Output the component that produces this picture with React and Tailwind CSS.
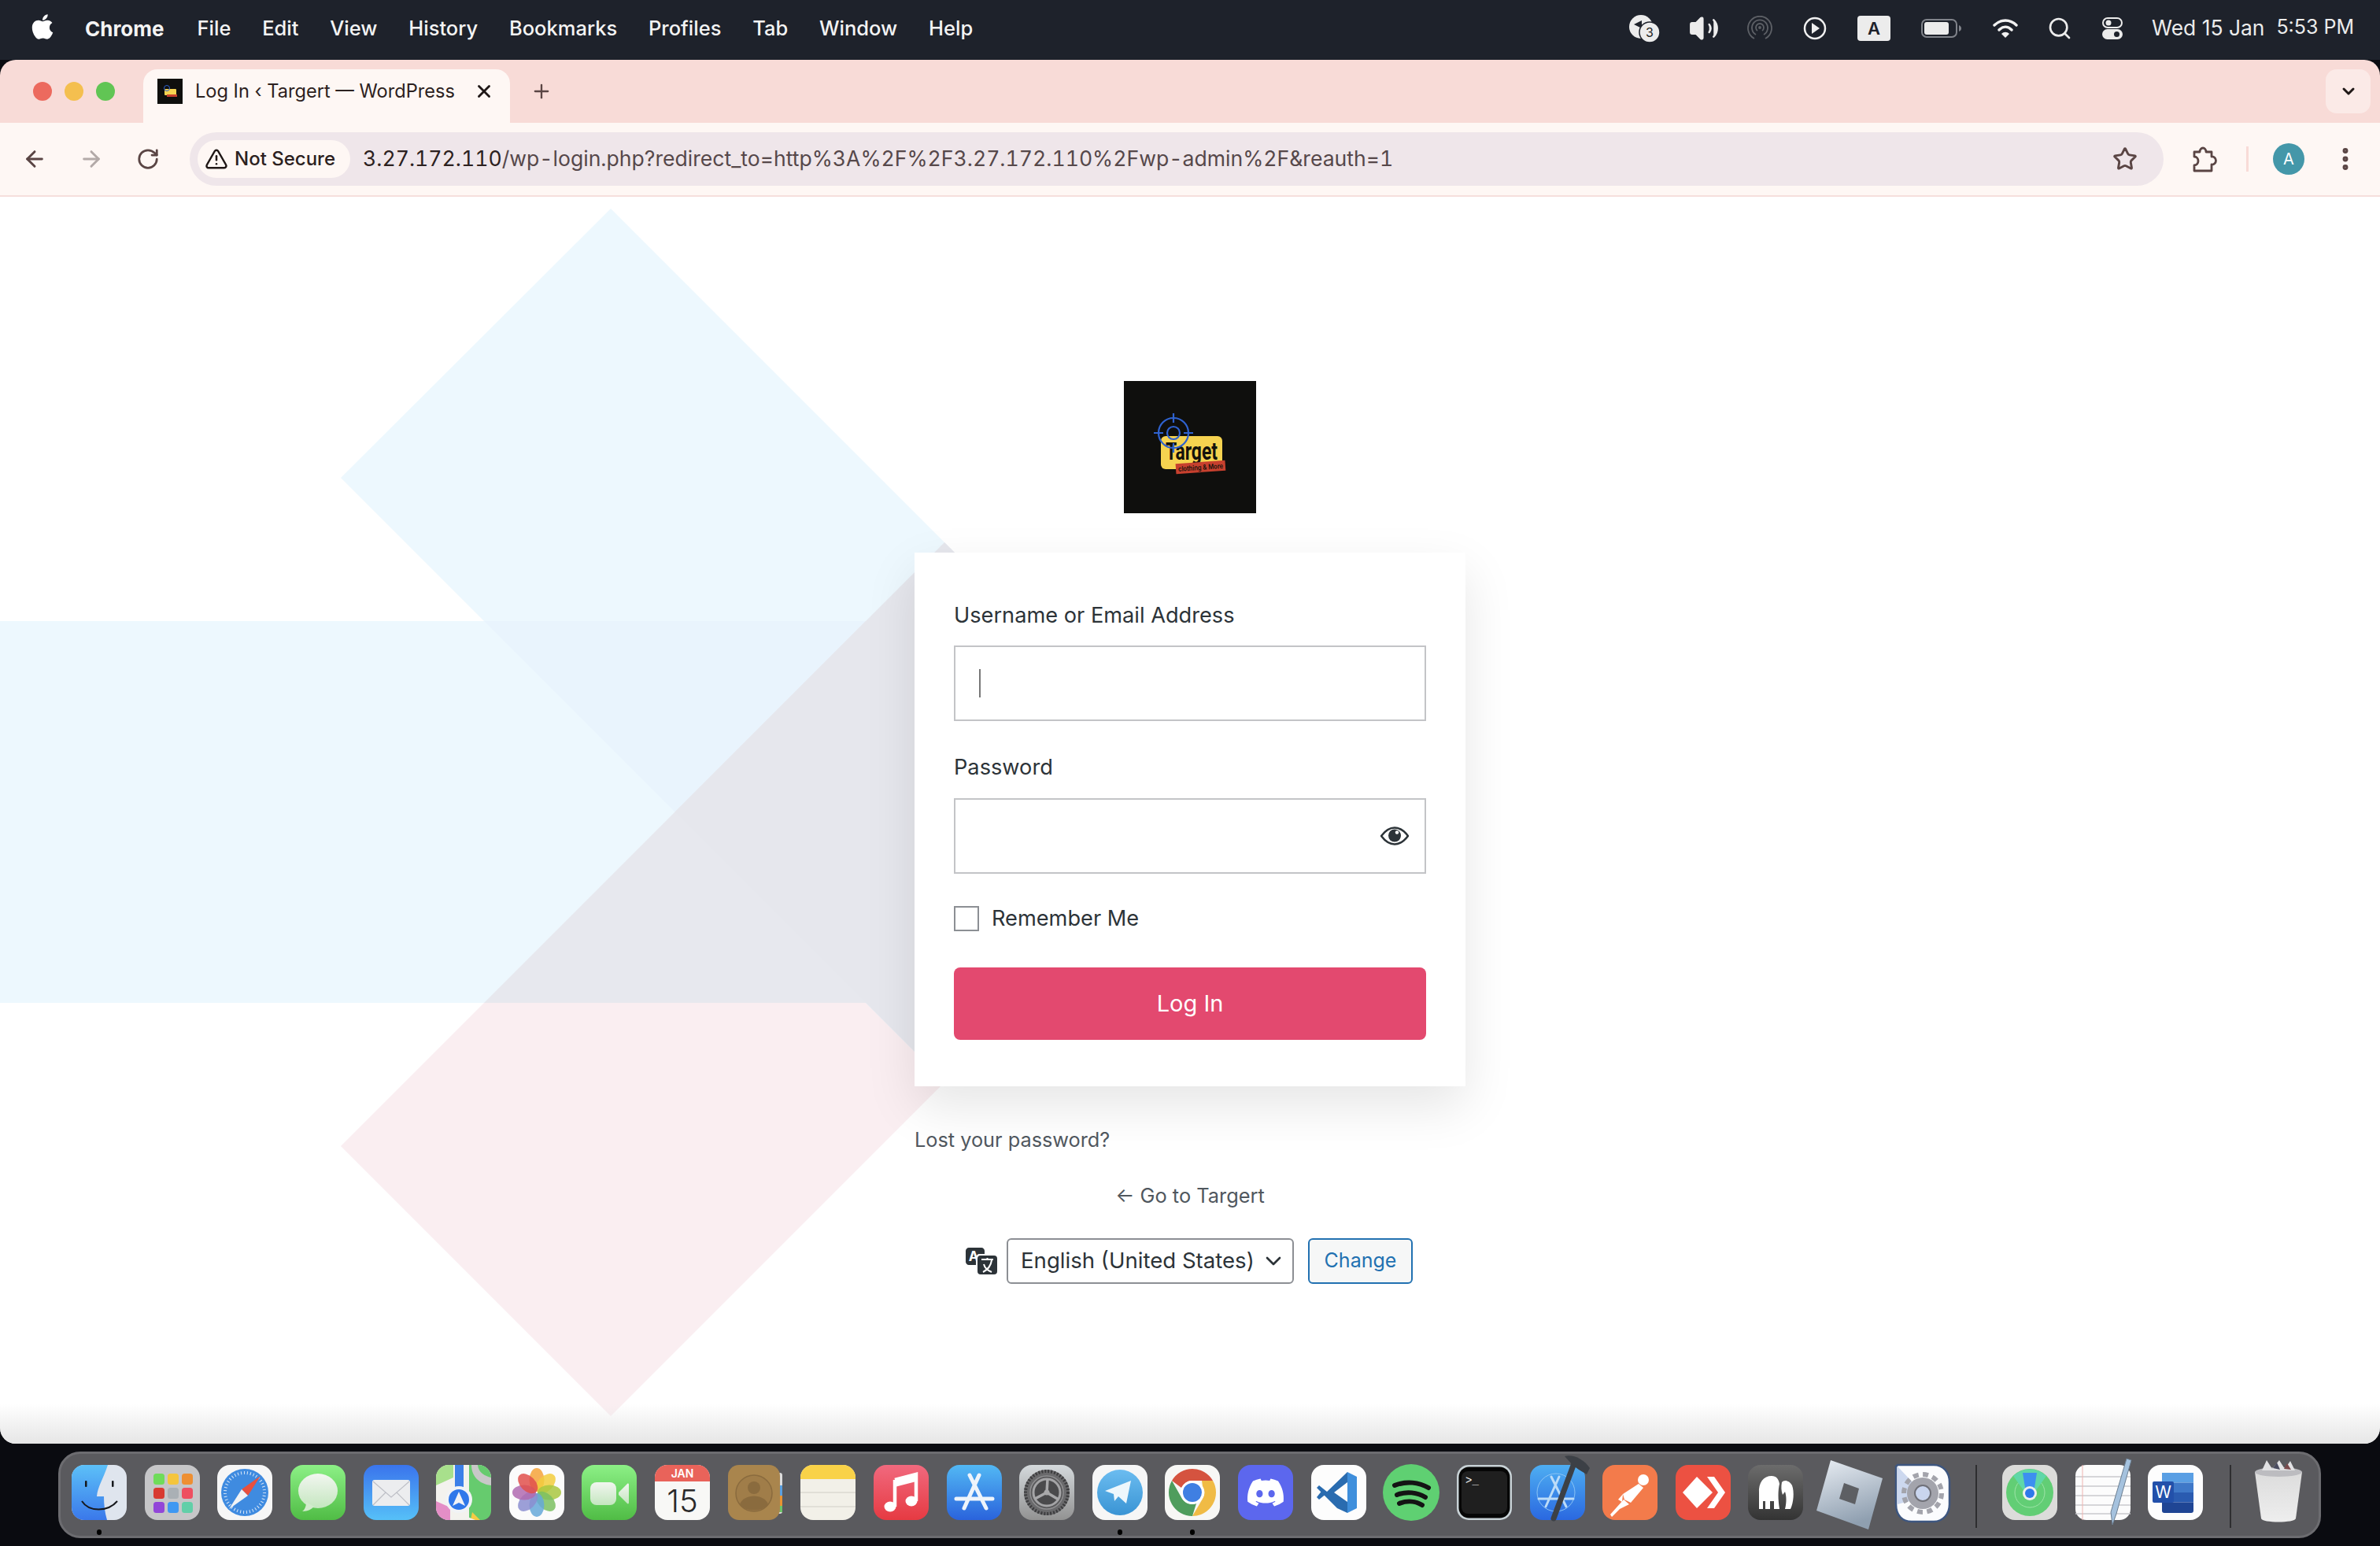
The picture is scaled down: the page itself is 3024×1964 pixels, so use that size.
import React from 'react';
import { ArrowLeft, ArrowRight, RotateCw, TriangleAlert, Star, X, Plus, ChevronDown, EllipsisVertical, Search, Volume2 } from 'lucide-react';
import { FaApple, FaDiscord } from 'react-icons/fa';

const menuItems = ['File', 'Edit', 'View', 'History', 'Bookmarks', 'Profiles', 'Tab', 'Window', 'Help'];

// Small wrapper so every dock icon shares the same 70px canvas
const Ico = ({ children }) => (
  <svg viewBox="0 0 70 70" className="w-[70px] h-[70px] overflow-visible">{children}</svg>
);

const Grad = ({ id, from, to }) => (
  <linearGradient id={id} x1="0" y1="0" x2="0" y2="1">
    <stop offset="0" stopColor={from} />
    <stop offset="1" stopColor={to} />
  </linearGradient>
);

const Finder = () => (
  <Ico>
    <defs><Grad id="fin" from="#5cc0f8" to="#3a78ea" /></defs>
    <rect width="70" height="70" rx="16" fill="#dfe5ee" />
    <path d="M16 0H46C40 18 33 28 32 40H41C41 50 42 60 45 70H16C7 70 0 63 0 54V16C0 7 7 0 16 0Z" fill="url(#fin)" />
    <path d="M13 46C22 60 46 60 58 46" fill="none" stroke="#16181c" strokeWidth="2" />
    <rect x="17" y="20" width="2.5" height="8" rx="1" fill="#16181c" />
    <rect x="51" y="20" width="2.5" height="8" rx="1" fill="#16181c" />
  </Ico>
);

const launchColors = ['#6fdc5a', '#f5c53c', '#ee8f32', '#d83a30', '#aab0b5', '#ee4f60', '#9246d8', '#3f98f2', '#62cfa8'];
const Launchpad = () => (
  <Ico>
    <rect width="70" height="70" rx="16" fill="#c6c6c8" />
    {launchColors.map((c, i) => (
      <rect key={i} x={11 + (i % 3) * 18} y={11 + Math.floor(i / 3) * 18} width="14" height="14" rx="3.5" fill={c} />
    ))}
  </Ico>
);

const Safari = () => (
  <Ico>
    <rect width="70" height="70" rx="16" fill="#f6f6f6" />
    <circle cx="35" cy="35" r="30" fill="#3f8be0" />
    <circle cx="35" cy="35" r="25" fill="none" stroke="#dce9f8" strokeWidth="4" strokeDasharray="1 3" />
    <path d="M55 14L31 31L39 39Z" fill="#e8503e" />
    <path d="M15 56L31 31L39 39Z" fill="#f1f3f5" />
  </Ico>
);

const Messages = () => (
  <Ico>
    <defs>
      <Grad id="msg" from="#8cf086" to="#50bc45" />
      <Grad id="msgb" from="#f2f6f0" to="#c4e6bf" />
    </defs>
    <rect width="70" height="70" rx="16" fill="url(#msg)" />
    <ellipse cx="35" cy="33" rx="25" ry="22" fill="url(#msgb)" />
    <path d="M20 47C20 53 18 57 15 59C22 59 27 56 30 53Z" fill="#d2ebcd" />
  </Ico>
);

const Mail = () => (
  <Ico>
    <defs><Grad id="mail" from="#3a74ec" to="#56c0f8" /></defs>
    <rect width="70" height="70" rx="16" fill="url(#mail)" />
    <rect x="11" y="19" width="48" height="33" rx="3" fill="#ecedef" />
    <path d="M12 21L35 41L58 21M12 51L28 35M58 51L42 35" fill="none" stroke="#bdbfc6" strokeWidth="1.2" />
  </Ico>
);

const Maps = () => (
  <Ico>
    <rect width="70" height="70" rx="16" fill="#f3f2ee" />
    <path d="M0 16C0 7 7 0 16 0H22V16L0 26Z" fill="#a8e08c" />
    <path d="M42 0H54C63 0 70 7 70 16V58C70 64 66 70 58 70H42V58Z" fill="#66cb6e" />
    <path d="M0 46L18 54V70H16C7 70 0 63 0 54Z" fill="#e48ec6" />
    <path d="M46 60L56 70H44Z" fill="#f6cb44" />
    <rect x="24" y="0" width="11" height="30" fill="#3c7fe8" />
    <path d="M45 0C45 14 54 24 70 26V16C62 14 54 10 53 0Z" fill="#c8c8c8" />
    <path d="M20 58L50 70H30Z" fill="#f3f2ee" />
    <circle cx="29" cy="44" r="17" fill="#f1f3f6" />
    <circle cx="29" cy="44" r="13" fill="#2f78ea" />
    <path d="M29 34L37 52L29 48L21 52Z" fill="#f1f3f6" />
  </Ico>
);

const petals = ['#f5a33a', '#f2cc3d', '#a9c73f', '#7bbf62', '#66a8d8', '#8b8ed0', '#b06ab0', '#e0504c'];
const Photos = () => (
  <Ico>
    <rect width="70" height="70" rx="16" fill="#fbfbfb" />
    {petals.map((c, i) => (
      <ellipse key={c} cx="35" cy="19" rx="9.5" ry="15" fill={c} fillOpacity="0.85" transform={`rotate(${i * 45} 35 35)`} />
    ))}
  </Ico>
);

const FaceTime = () => (
  <Ico>
    <defs>
      <Grad id="ft" from="#8cf086" to="#50bc45" />
      <Grad id="ftb" from="#f2f6f0" to="#c4e6bf" />
    </defs>
    <rect width="70" height="70" rx="16" fill="url(#ft)" />
    <rect x="11" y="22" width="33" height="29" rx="8" fill="url(#ftb)" />
    <path d="M47 35L58 24C59 23 60 24 60 25V48C60 49 59 50 58 49L47 38Z" fill="url(#ftb)" />
  </Ico>
);

const Calendar = () => (
  <Ico>
    <rect width="70" height="70" rx="16" fill="#f8f8f6" />
    <path d="M16 0H54C63 0 70 7 70 16V21H0V16C0 7 7 0 16 0Z" fill="#e9635a" />
    <text x="35" y="16" textAnchor="middle" fontSize="14" fontWeight="600" fill="#fff" fontFamily="Inter, sans-serif">JAN</text>
    <text x="35" y="60" textAnchor="middle" fontSize="40" fontWeight="300" fill="#2a2a2a" fontFamily="Inter, sans-serif">15</text>
  </Ico>
);

const Contacts = () => (
  <Ico>
    <rect x="60" y="10" width="9" height="52" rx="3" fill="#dcdcdc" />
    <rect x="64" y="26" width="5" height="13" fill="#5a9fe0" />
    <rect x="64" y="39" width="5" height="13" fill="#e89332" />
    <rect x="64" y="52" width="5" height="8" fill="#6cc368" />
    <rect width="66" height="70" rx="14" fill="#a9854d" />
    <circle cx="33" cy="36" r="23" fill="#a07d49" stroke="#8a6b3e" strokeWidth="1.5" />
    <circle cx="33" cy="29" r="8" fill="#8a6b3e" />
    <path d="M15 50C20 36 46 36 51 50C45 60 21 60 15 50Z" fill="#8a6b3e" />
  </Ico>
);

const Notes = () => (
  <Ico>
    <rect width="70" height="70" rx="16" fill="#f2f0e8" />
    <path d="M16 0H54C63 0 70 7 70 16V18H0V16C0 7 7 0 16 0Z" fill="#f9d248" />
    <path d="M0 35H70M0 53H70" stroke="#dbd9d1" strokeWidth="1.5" />
  </Ico>
);

const Music = () => (
  <Ico>
    <defs><Grad id="mus" from="#f1697e" to="#e63a42" /></defs>
    <rect width="70" height="70" rx="16" fill="url(#mus)" />
    <path d="M27 19L54 12V46" fill="none" stroke="#fff" strokeWidth="4.5" />
    <path d="M27 19V53" stroke="#fff" strokeWidth="4.5" />
    <path d="M27 19L54 12V21L27 28Z" fill="#fff" />
    <ellipse cx="21" cy="53" rx="7.5" ry="6.5" fill="#fff" />
    <ellipse cx="48" cy="46" rx="7.5" ry="6.5" fill="#fff" />
  </Ico>
);

const AppStore = () => (
  <Ico>
    <defs><Grad id="app" from="#52b8f4" to="#2a63dc" /></defs>
    <rect width="70" height="70" rx="16" fill="url(#app)" />
    <path d="M41 13L22 55M29 13L50 55M12 43H58" stroke="#eef4fb" strokeWidth="5" strokeLinecap="round" />
  </Ico>
);

const SystemSettings = () => (
  <Ico>
    <defs><Grad id="set" from="#d4d9dc" to="#929292" /></defs>
    <rect width="70" height="70" rx="16" fill="url(#set)" />
    <circle cx="35" cy="35" r="29" fill="#6a6a6c" />
    <circle cx="35" cy="35" r="27" fill="none" stroke="#3c3c3e" strokeWidth="4" strokeDasharray="2 2" />
    <circle cx="35" cy="35" r="21" fill="#58585a" stroke="#8e8e90" strokeWidth="1.5" />
    <circle cx="35" cy="35" r="17" fill="#4a4a4c" stroke="#a4a4a6" strokeWidth="3" />
    <path d="M35 35L36 18M35 35L50 44M35 35L20 43" stroke="#a8a8aa" strokeWidth="3.5" />
    <circle cx="35" cy="35" r="3.500" fill="#a8a8aa" />
  </Ico>
);

const Telegram = () => (
  <Ico>
    <defs><Grad id="tg" from="#6bbcf0" to="#3a94d4" /></defs>
    <rect width="70" height="70" rx="16" fill="#f6f6f6" />
    <circle cx="35" cy="35" r="29" fill="url(#tg)" />
    <path d="M49 20L43 49L33 40L28 46L27 37L16 33Z" fill="#eef7fc" />
  </Ico>
);

const Chrome = () => (
  <Ico>
    <rect width="70" height="70" rx="16" fill="#f7f7f5" />
    <path d="M35 5A30 30 0 0 1 61 20H35A15 15 0 0 0 21 29L9 20A30 30 0 0 1 35 5Z" fill="#d5533f" />
    <path d="M61 20A30 30 0 0 1 35 65L48 43A15 15 0 0 0 48 27L47 20Z" fill="#f0bb45" />
    <path d="M35 65A30 30 0 0 1 9 20L22 43A15 15 0 0 0 40 49Z" fill="#4f9d5d" />
    <circle cx="35" cy="35" r="15" fill="#fff" />
    <circle cx="35" cy="35" r="12" fill="#3f7fe2" />
  </Ico>
);

const Discord = () => (
  <div className="w-[70px] h-[70px] rounded-[16px] bg-[#5c67ee] flex items-center justify-center">
    <FaDiscord className="w-[50px] h-[50px] text-white" />
  </div>
);

const VsCode = () => (
  <Ico>
    <rect width="70" height="70" rx="16" fill="#fdfdfd" />
    <path d="M46 9L58 15V55L46 61Z" fill="#3f8fdc" />
    <path d="M46 9L20 34L10 26L7 29L33 55L46 61V47L29 35L46 22Z" fill="#2a6cb0" />
    <path d="M7 41L10 44L20 36L15 31Z" fill="#2a6cb0" />
  </Ico>
);

const Spotify = () => (
  <div className="w-[70px] h-[70px] flex items-center justify-center">
    <svg viewBox="0 0 72 72" className="w-[72px] h-[72px] shrink-0">
      <circle cx="36" cy="36" r="36" fill="#5fd072" />
      <path d="M15 27C30 21 46 23 58 30M18 39C30 34 44 36 54 42M21 50C31 46 42 47 50 52" fill="none" stroke="#141414" strokeWidth="6" strokeLinecap="round" />
    </svg>
  </div>
);

const Terminal = () => (
  <Ico>
    <rect width="70" height="70" rx="15" fill="#c8d2d6" />
    <rect x="2.5" y="2.5" width="65" height="65" rx="13" fill="#060606" />
    <rect x="6" y="8" width="58" height="54" rx="8" fill="#1f1f1f" />
    <text x="11" y="24" fontSize="14" fill="#f2f2f2" fontFamily="Liberation Mono, monospace">&gt;_</text>
  </Ico>
);

const Xcode = () => (
  <Ico>
    <defs><Grad id="xc" from="#4eaef2" to="#2a68e0" /></defs>
    <rect width="70" height="70" rx="16" fill="url(#xc)" />
    <circle cx="33" cy="35" r="24" fill="none" stroke="#8ac4f5" strokeWidth="1" />
    <path d="M37 15L20 53M27 15L46 53M11 43H55" stroke="#bcdcf8" strokeWidth="3" strokeLinecap="round" />
    <path d="M56 -2L30 68" stroke="#3c4046" strokeWidth="7" strokeLinecap="round" />
    <path d="M44 -11C54 -14 68 -8 76 4L72 12L62 6C56 2 50 -4 44 -11Z" fill="#3c4046" />
  </Ico>
);

const Postman = () => (
  <Ico>
    <rect width="70" height="70" rx="16" fill="#f37b4b" />
    <circle cx="52" cy="19" r="7" fill="#fff" />
    <path d="M46 24L52 29L36 48L28 44L26 37Z" fill="#fff" />
    <path d="M27 44L34 50L22 56L12 66L10 63L18 54Z" fill="#fff" />
    <path d="M26 37L20 44L25 47" fill="#fff" />
  </Ico>
);

const AnyDesk = () => (
  <Ico>
    <rect width="70" height="70" rx="16" fill="#ec5142" />
    <path d="M27 15L47 35L27 55L9 35Z" fill="#fff" />
    <path d="M40 15L49 15L63 35L49 55L40 55L54 35Z" fill="#fff" />
  </Ico>
);

const Mamp = () => (
  <Ico>
    <defs><Grad id="mamp" from="#6c6c6c" to="#333" /></defs>
    <rect width="70" height="70" rx="16" fill="url(#mamp)" />
    <path d="M14 56V36C13 22 20 14 30 14C36 14 39 18 40 24C38 32 38 44 40 56H33V46H28V56H22V46H19V56Z" fill="#fff" />
    <path d="M43 22C46 18 53 20 56 26C59 34 58 48 54 56H47C49 48 49 40 47 34L44 38C42 33 42 27 43 22Z" fill="#fff" />
  </Ico>
);

const Roblox = () => (
  <Ico>
    <defs>
      <linearGradient id="rob" x1="0" y1="0" x2="0.3" y2="1">
        <stop offset="0" stopColor="#e8edf3" />
        <stop offset="1" stopColor="#8f9fb0" />
      </linearGradient>
    </defs>
    <path d="M18 -6L84 17L66 82L0 58Z" transform="translate(-6 0)" fill="url(#rob)" />
    <path d="M35 23L54 30L49 50L29 43Z" transform="translate(-6 0)" fill="#5d5f63" />
  </Ico>
);

const GearApp = () => (
  <Ico>
    <path d="M4 0H50C62 0 70 9 70 22V50C70 62 62 72 50 72H22C10 72 2 64 2 50V2Z" fill="#fbfcfe" stroke="#3d5680" strokeWidth="2.5" />
    <path d="M4 2L40 40L4 50Z" fill="#ccd8ef" />
    <circle cx="36" cy="36" r="20" fill="#a3a4ac" />
    <circle cx="36" cy="36" r="24" fill="none" stroke="#a3a4ac" strokeWidth="6" strokeDasharray="7 5.5" />
    <circle cx="36" cy="36" r="10" fill="#c9d5ee" stroke="#6f7078" strokeWidth="2" />
  </Ico>
);

const FindMy = () => (
  <Ico>
    <rect width="70" height="70" rx="16" fill="#dcdcda" />
    <circle cx="35" cy="35" r="30" fill="#62ce75" />
    <circle cx="35" cy="35" r="19" fill="none" stroke="#9ee4a8" strokeWidth="1" />
    <path d="M14 14A30 30 0 0 1 56 14L41 35H29Z" fill="#5fd7a8" />
    <path d="M26 10L44 10L40 35H30Z" fill="#3d8ff0" />
    <circle cx="35" cy="36" r="9" fill="#eef0ee" />
    <circle cx="35" cy="36" r="6" fill="#2f78ea" />
  </Ico>
);

const TextEdit = () => (
  <Ico>
    <rect width="70" height="70" rx="14" fill="#fcfcfc" />
    <path d="M0 15H70M0 27H70M0 39H70M0 51H70M0 62H70" stroke="#c9c9cd" strokeWidth="1.5" />
    <path d="M9 0V70" stroke="#f0b4b0" strokeWidth="1" />
    <path d="M65 -8L71 -6L52 62L47 76L45 60Z" fill="#a5c2de" stroke="#6c7f92" strokeWidth="1" />
  </Ico>
);

const Word = () => (
  <Ico>
    <rect width="70" height="70" rx="16" fill="#fdfdfd" />
    <rect x="18" y="10" width="40" height="12.5" fill="#5a9fe4" />
    <rect x="18" y="22.5" width="40" height="12.5" fill="#3f78c8" />
    <rect x="18" y="35" width="40" height="12.5" fill="#2a5bb0" />
    <path d="M18 47.5H58V58C58 60 57 61 55 61H21C19 61 18 60 18 58Z" fill="#1f4594" />
    <rect x="6" y="21" width="27" height="27" rx="2" fill="#2250aa" />
    <text x="19.5" y="42" textAnchor="middle" fontSize="21" fill="#fff" fontFamily="Inter, sans-serif">W</text>
  </Ico>
);

const Trash = () => (
  <Ico>
    <defs><Grad id="tr" from="#dcdcdc" to="#eeeeee" /></defs>
    <path d="M5 9H65L57 68C56 74 14 74 13 68Z" fill="url(#tr)" />
    <ellipse cx="35" cy="9" rx="30" ry="6" fill="#bcbcc0" />
    <path d="M14 7L20 -6L27 5L36 -6L43 5L50 -5L56 7Z" fill="#e2e2e4" />
    <path d="M28 4L33 -3L37 6Z" fill="#4a4c60" />
    <path d="M42 5L46 -2L51 6Z" fill="#7a4a4c" />
  </Ico>
);

const dockGroupA = [
  { name: 'finder', El: Finder, dot: true },
  { name: 'launchpad', El: Launchpad },
  { name: 'safari', El: Safari },
  { name: 'messages', El: Messages },
  { name: 'mail', El: Mail },
  { name: 'maps', El: Maps },
  { name: 'photos', El: Photos },
  { name: 'facetime', El: FaceTime },
  { name: 'calendar', El: Calendar },
  { name: 'contacts', El: Contacts },
  { name: 'notes', El: Notes },
  { name: 'music', El: Music },
  { name: 'appstore', El: AppStore },
  { name: 'settings', El: SystemSettings },
  { name: 'telegram', El: Telegram, dot: true },
  { name: 'chrome', El: Chrome, dot: true },
  { name: 'discord', El: Discord },
  { name: 'vscode', El: VsCode },
  { name: 'spotify', El: Spotify },
  { name: 'terminal', El: Terminal },
  { name: 'xcode', El: Xcode },
  { name: 'postman', El: Postman },
  { name: 'anydesk', El: AnyDesk },
  { name: 'mamp', El: Mamp },
  { name: 'roblox', El: Roblox },
  { name: 'gear', El: GearApp },
];
const dockGroupB = [
  { name: 'findmy', El: FindMy },
  { name: 'textedit', El: TextEdit },
  { name: 'word', El: Word },
];

const DockItem = ({ El, dot }) => (
  <div className="relative w-[70px] h-[70px] shrink-0">
    <El />
    {dot && <span className="absolute left-[32px] top-[82px] w-[6px] h-[7px] rounded-full bg-black" />}
  </div>
);

const Slot = ({ w, children }) => (
  <div className="flex justify-center items-center" style={{ width: w }}>{children}</div>
);

const MenuBar = () => (
  <div className="h-[76px] shrink-0 bg-[#1e222b] flex items-center pb-[4px] text-[#f4f4f4] text-[25.5px] font-['Inter',sans-serif]">
    <FaApple className="ml-[36px] w-[36px] h-[36px] text-white -mt-[4px]" />
    <span className="ml-[36px] font-bold text-[26px]">Chrome</span>
    <div className="ml-[42px] flex gap-[39.8px] font-medium">
      {menuItems.map((item) => <span key={item}>{item}</span>)}
    </div>
    <div className="ml-auto flex items-center">
      <Slot w={76}>
        <svg viewBox="0 0 44 38" className="w-[44px] h-[38px]">
          <circle cx="17" cy="17" r="15" fill="#ececec" />
          <path d="M8 14L18 9V19Z" fill="#1e222b" />
          <circle cx="28" cy="24" r="13" fill="#ececec" stroke="#1e222b" strokeWidth="1.5" />
          <text x="28" y="30" textAnchor="middle" fontSize="16" fill="#222" fontFamily="Inter, sans-serif">3</text>
        </svg>
      </Slot>
      <Slot w={73}><Volume2 className="w-[40px] h-[40px] text-[#ececec]" fill="#ececec" strokeWidth={1.5} /></Slot>
      <Slot w={69}>
        <svg viewBox="0 0 32 32" className="w-[32px] h-[32px]" fill="none" stroke="#5d6066" strokeWidth="1.8">
          <path d="M9 29A15 15 0 1 1 23 29" />
          <path d="M11 24A10 10 0 1 1 21 24" />
          <path d="M13 19A5 5 0 1 1 19 19" />
          <circle cx="16" cy="15" r="1" />
        </svg>
      </Slot>
      <Slot w={72}>
        <svg viewBox="0 0 30 30" className="w-[30px] h-[30px]">
          <circle cx="15" cy="15" r="13" fill="none" stroke="#f0f0f0" strokeWidth="2.5" />
          <path d="M11 8L21 15L11 22Z" fill="#f0f0f0" />
        </svg>
      </Slot>
      <Slot w={78}>
        <div className="w-[42px] h-[32px] rounded-[4px] bg-[#ececec] flex items-center justify-center text-[#1e222b] text-[22px] font-semibold">A</div>
      </Slot>
      <Slot w={94}>
        <svg viewBox="0 0 52 24" className="w-[52px] h-[24px]">
          <rect x="1" y="1" width="44" height="22" rx="6" fill="none" stroke="#80838a" strokeWidth="2" />
          <rect x="4" y="4" width="31" height="16" rx="3" fill="#ececec" />
          <path d="M48 8C50 9 51 10 51 12C51 14 50 15 48 16Z" fill="#80838a" />
        </svg>
      </Slot>
      <Slot w={68}>
        <svg viewBox="0 0 34 26" className="w-[34px] h-[26px]" fill="none" stroke="#f2f2f2" strokeWidth="3.4" strokeLinecap="round">
          <path d="M3 9C11 1 23 1 31 9" />
          <path d="M9 15C14 10 20 10 25 15" />
          <path d="M17 25L12 20C15 17 19 17 22 20Z" fill="#f2f2f2" stroke="none" />
        </svg>
      </Slot>
      <Slot w={70}><Search className="w-[32px] h-[32px] text-[#ececec]" strokeWidth={2} /></Slot>
      <Slot w={64}>
        <svg viewBox="0 0 26 28" className="w-[26px] h-[28px]">
          <rect x="1" y="1" width="24" height="12" rx="6" fill="none" stroke="#ececec" strokeWidth="2" />
          <circle cx="8" cy="7" r="3.5" fill="#ececec" />
          <rect y="15" width="26" height="13" rx="6.5" fill="#ececec" />
          <circle cx="18.5" cy="21.5" r="3.5" fill="#1e222b" />
        </svg>
      </Slot>
      <div className="ml-[18px] mr-[33px] flex gap-[15px] text-[#ececec] text-[25px]">
        <span className="text-[26.4px]">Wed 15 Jan</span>
        <span>5:53 PM</span>
      </div>
    </div>
  </div>
);

const Favicon = () => (
  <svg viewBox="0 0 32 32" className="w-[32px] h-[32px]">
    <rect width="32" height="32" fill="#0f0f0d" />
    <rect x="9" y="13" width="15" height="8" rx="1" fill="#f6d350" />
    <rect x="12" y="20" width="13" height="3" fill="#c7402e" />
    <circle cx="12" cy="12" r="3.500" fill="none" stroke="#2f62cf" strokeWidth="1" />
  </svg>
);

const TabStrip = () => (
  <div className="h-[80px] shrink-0 bg-[#f8dbd7] flex items-end pl-[42px] text-[#2c2120]">
    <div className="self-center flex gap-[16px]">
      <span className="w-[24px] h-[24px] rounded-full bg-[#ec6a5e]" />
      <span className="w-[24px] h-[24px] rounded-full bg-[#f4bf4f]" />
      <span className="w-[24px] h-[24px] rounded-full bg-[#61c554]" />
    </div>
    <div className="ml-[36px] w-[466px] h-[68px] bg-[#fef7f4] rounded-t-[18px] flex items-center pl-[18px] pb-[12px]">
      <Favicon />
      <span className="ml-[16px] text-[23.6px] whitespace-nowrap">Log In ‹ Targert — WordPress</span>
      <X className="ml-[24px] w-[26px] h-[26px] text-[#1f1716]" strokeWidth={2.6} />
    </div>
    <Plus className="self-center ml-[26px] w-[28px] h-[28px] text-[#5a4544]" strokeWidth={2} />
    <div className="self-center ml-auto mr-[12px] w-[57px] h-[56px] rounded-[14px] bg-[#fbeae7] flex items-center justify-center">
      <ChevronDown className="w-[24px] h-[24px] text-[#1f1716]" strokeWidth={3} />
    </div>
  </div>
);

const Toolbar = () => (
  <div className="h-[94px] shrink-0 bg-[#fef7f4] border-b-[2px] border-[#f5dfdc] flex items-center text-[#5a4544]">
    <ArrowLeft className="ml-[28px] w-[32px] h-[32px]" strokeWidth={2.2} />
    <ArrowRight className="ml-[40px] w-[32px] h-[32px] text-[#b3aaa8]" strokeWidth={2.2} />
    <RotateCw className="ml-[41px] w-[30px] h-[30px]" strokeWidth={2.2} />
    <div className="ml-[38px] w-[2508px] h-[68px] rounded-full bg-[#efe6ea] flex items-center pl-[10px]">
      <div className="w-[194px] h-[48px] rounded-full bg-[#fef7f4] flex items-center pl-[9px] text-[#2c2120] text-[24px] font-medium">
        <TriangleAlert className="w-[30px] h-[30px] text-[#1f1716]" strokeWidth={2} />
        <span className="ml-[8px] whitespace-nowrap">Not Secure</span>
      </div>
      <div className="ml-[16px] text-[26.6px] tabular-nums whitespace-nowrap text-[#56484a]">
        <span className="text-[#2c2120]">3.27.172.110</span>/wp-login.php?redirect_to=http%3A%2F%2F3.27.172.110%2Fwp-admin%2F&amp;reauth=1
      </div>
      <Star className="ml-auto mr-[33px] w-[32px] h-[32px]" strokeWidth={2.2} />
    </div>
    <svg viewBox="0 0 31 33" className="ml-[37px] w-[31px] h-[33px]" fill="none" stroke="#5a4544" strokeWidth="2.8" strokeLinejoin="round">
      <path d="M2 7H9C9 4 11 2 13 2C15 2 17 4 17 7H24V13C27 12.500 29.500 15 29.500 18C29.500 21 27 23.500 24 23V31H2V24C5 24 7 21.500 7 18.500C7 15.500 5 13 2 13Z" />
    </svg>
    <span className="ml-[37px] w-[3px] h-[32px] bg-[#f8dbd7]" />
    <div className="ml-[31px] w-[40px] h-[40px] rounded-full bg-[#4497a9] flex items-center justify-center text-white text-[20px]">A</div>
    <EllipsisVertical className="ml-[34px] w-[36px] h-[36px]" strokeWidth={2.6} />
  </div>
);

// Decorative arrow shapes behind the login form, coordinates are full screen pixels
const BackgroundShapes = () => (
  <svg viewBox="0 250 3024 1584" className="absolute inset-0 w-full h-full">
    <polygon points="433,1456 1200,689 1215,704 1215,1360 776,1799" fill="#faeef1" />
    <polygon points="776,265 1215,704 1215,1300 1162,1336 433,607" fill="#edf8fe" />
    <rect x="0" y="789" width="1202" height="485" fill="#edf8fe" />
    <polygon points="615,789 1100,789 857.5,1031.5" fill="#e9f4fd" />
    <polygon points="1100,789 1202,789 1202,1274 615,1274" fill="#e7e8ee" />
    <polygon points="1200,689 1215,704 1215,1300 1162,1336 857.5,1031.5" fill="#e6e7ed" />
  </svg>
);

const LangIcon = () => (
  <svg viewBox="0 0 40 34" className="w-[40px] h-[34px]">
    <path d="M4 0H20C22 0 24 2 24 4V8H18C15 8 13 10 13 13V22H4C2 22 0 20 0 18V4C0 2 2 0 4 0Z" fill="#2c3338" />
    <text x="10" y="17" textAnchor="middle" fontSize="17" fontWeight="700" fill="#fff" fontFamily="Inter, sans-serif">A</text>
    <rect x="15" y="10" width="25" height="24" rx="4" fill="#2c3338" />
    <path d="M20 15H35M27.5 13V16M22 31C28 28 32 23 33 16M33 31C28 29 24 25 23 21" fill="none" stroke="#fff" strokeWidth="2" />
  </svg>
);

const LoginPage = () => (
  <div className="relative flex-1 bg-white overflow-hidden font-['Inter',sans-serif]">
    <BackgroundShapes />
    <div className="relative w-[700px] mx-auto pt-[234px]">
      <svg viewBox="0 0 168 168" className="block mx-auto w-[168px] h-[168px]">
        <rect width="168" height="168" fill="#0f0f0d" />
        <rect x="47" y="70" width="78" height="42" rx="6" fill="#f6d350" />
        <text x="53" y="100" fontSize="31" fontWeight="700" fill="#14120c" fontFamily="Roboto, sans-serif" textLength="66" lengthAdjust="spacingAndGlyphs">Target</text>
        <g transform="rotate(-4 97 110)">
          <rect x="66" y="103" width="63" height="13" fill="#c7402e" />
          <text x="69" y="113" fontSize="9" fontWeight="600" fill="#14120c" fontFamily="Inter, sans-serif" textLength="57" lengthAdjust="spacingAndGlyphs">clothing &amp; More</text>
        </g>
        <circle cx="63" cy="66" r="19" fill="none" stroke="#2f62cf" strokeWidth="2.2" />
        <circle cx="63" cy="66" r="8" fill="none" stroke="#2f62cf" strokeWidth="2.2" />
        <path d="M63 41V53M63 79V91M38 66H50M76 66H88" stroke="#2f62cf" strokeWidth="2.2" />
      </svg>
      <div className="mt-[50px] h-[678px] bg-white shadow-[0_25px_60px_rgba(0,0,0,0.1)] px-[50px] pt-[62px] text-[#2c3338] text-[27.2px]">
        <label className="block leading-[36px]">Username or Email Address</label>
        <div className="mt-[20px] h-[96px] border-[2px] border-[#c3c4c7] bg-white flex items-center pl-[30px]">
          <span className="w-[2px] h-[36px] bg-[#777]" />
        </div>
        <label className="block mt-[41px] leading-[36px]">Password</label>
        <div className="mt-[21px] h-[96px] border-[2px] border-[#c3c4c7] bg-white flex items-center justify-end pr-[20px]">
          <svg viewBox="0 0 36 24" className="w-[36px] h-[24px]">
            <path d="M1 12C7 4 12 1.500 18 1.500C24 1.500 29 4 35 12C29 20 24 22.500 18 22.500C12 22.500 7 20 1 12Z" fill="none" stroke="#2c3338" strokeWidth="2.6" />
            <circle cx="18" cy="11.500" r="8" fill="#2c3338" />
            <circle cx="21" cy="7.500" r="2.200" fill="#fff" />
          </svg>
        </div>
        <div className="mt-[41px] flex items-center h-[32px]">
          <span className="w-[32px] h-[32px] border-[2px] border-[#8c8f94] bg-white" />
          <span className="ml-[16px]">Remember Me</span>
        </div>
        <button className="mt-[46px] w-full h-[92px] rounded-[8px] bg-[#e3496f] text-white text-[29px]">Log In</button>
      </div>
      <div className="mt-[50px] text-[25.3px] leading-[36px] text-[#50575e]">Lost your password?</div>
      <div className="mt-[35px] text-[25.4px] leading-[36px] text-[#50575e] text-center">← Go to Targert</div>
      <div className="mt-[36px] pl-[65px] flex items-center">
        <LangIcon />
        <div className="ml-[12px] w-[365px] h-[58px] rounded-[6px] border-[2px] border-[#8c8f94] bg-white flex items-center pl-[16px] text-[#2c3338] text-[27.6px]">
          <span className="whitespace-nowrap">English (United States)</span>
          <ChevronDown className="ml-auto mr-[8px] w-[32px] h-[32px] text-[#2c3338]" strokeWidth={2} />
        </div>
        <div className="ml-[18px] w-[133px] h-[58px] rounded-[6px] border-[2px] border-[#2271b1] bg-[#f6f7f7] flex items-center justify-center text-[#2271b1] text-[25px]">Change</div>
      </div>
    </div>
    <div className="absolute left-0 right-0 bottom-0 h-[50px] bg-gradient-to-b from-transparent to-[#e6e6e6]" />
  </div>
);

const Dock = () => (
  <div className="mt-[10px] ml-[74px] w-[2875px] h-[110px] rounded-[28px] border-[3px] border-[#6c6c70] bg-[#5a5a5e] flex pl-[14px] pt-[14px] gap-[22.63px]">
    {dockGroupA.map(({ name, El, dot }) => <DockItem key={name} El={El} dot={dot} />)}
    <span className="ml-[11px] mr-[9px] w-[2px] h-[80px] bg-[#2e2e30] shrink-0" />
    {dockGroupB.map(({ name, El, dot }) => <DockItem key={name} El={El} dot={dot} />)}
    <span className="ml-[11px] mr-[3px] w-[2px] h-[80px] bg-[#2e2e30] shrink-0" />
    <DockItem El={Trash} />
  </div>
);

const App = () => (
  <div className="w-[3024px] h-[1964px] bg-[#0a0b10] flex flex-col overflow-hidden font-['Inter',sans-serif]">
    <MenuBar />
    <div className="h-[1758px] shrink-0 rounded-[20px] overflow-hidden flex flex-col">
      <TabStrip />
      <Toolbar />
      <LoginPage />
    </div>
    <Dock />
  </div>
);

export default App;
